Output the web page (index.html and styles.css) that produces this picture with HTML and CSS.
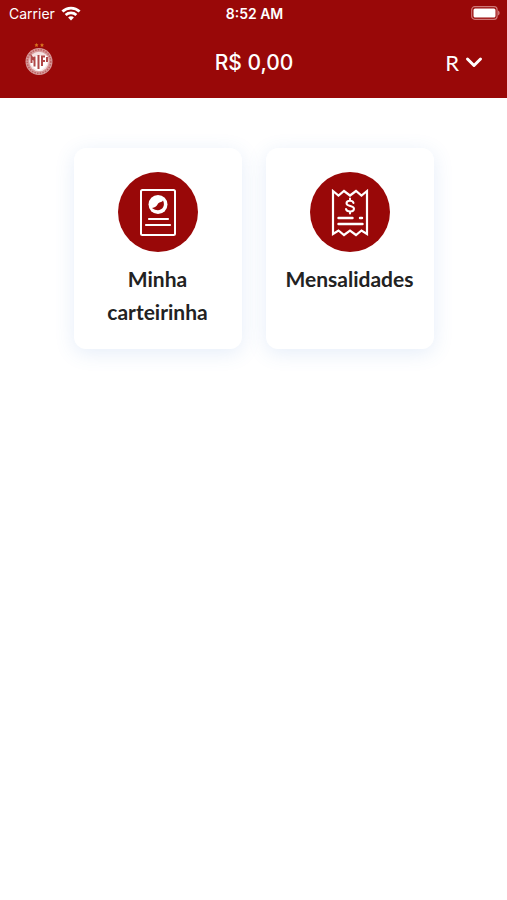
FILE: index.html
```html
<!DOCTYPE html>
<html lang="pt-BR">
<head>
  <meta charset="UTF-8">
  <meta name="viewport" content="width=device-width, initial-scale=1">
  <title>Carteirinha</title>
  <link rel="stylesheet" href="styles.css">
</head>
<body>
  <header class="header">
    <div class="status">
      <div class="carrier">
        <span>Carrier</span>
        <svg width="20" height="15" viewBox="0 0 18 14" fill="none" stroke="#fff" stroke-width="2.6">
          <path d="M1 5.200C5.500 .8 12.500 .8 17 5.200"/>
          <path d="M4 8.400C6.800 5.800 11.200 5.800 14 8.400"/>
          <path d="M6.300 10.800C7.800 9.300 10.200 9.300 11.700 10.800L9 13.600Z" fill="#fff" stroke="none"/>
        </svg>
      </div>
      <time class="clock">8:52 AM</time>
      <svg class="battery" width="29" height="14" viewBox="0 0 29 14">
        <rect x=".7" y=".7" width="25.400" height="12.600" rx="3" fill="none" stroke="#cf7777" stroke-width="1.2"/>
        <rect x="2.500" y="2.500" width="22" height="9" rx="1.500" fill="#fff"/>
        <path d="M27 4.500C29.200 5.500 29.200 8.500 27 9.500Z" fill="#cf7777"/>
      </svg>
    </div>
    <div class="topbar">
      <a class="crest" href="#" aria-label="Início">
        <svg width="28" height="34" viewBox="0 0 28 34">
          <g fill="#d9741f">
            <path d="M11.500 0l.7 1.300 1.300.2-1 1 .3 1.500-1.300-.7-1.300.7.3-1.500-1-1 1.300-.2z"/>
            <path d="M17 0l.7 1.300 1.300.2-1 1 .3 1.500-1.300-.7-1.300.7.3-1.500-1-1 1.300-.2z"/>
          </g>
          <circle cx="14" cy="18.500" r="13.500" fill="#d79a9a"/>
          <circle cx="14" cy="18.500" r="11.800" fill="none" stroke="#bd6262" stroke-width="1.500" stroke-dasharray="1.500 1.200"/>
          <circle cx="14" cy="18.500" r="9.800" fill="#f6e3e3"/>
          <path d="M5.500 13h17v5c0 5-4 8-8.500 10-4.500-2-8.500-5-8.500-10z" fill="#fff"/>
          <g fill="none" stroke="#b04848" stroke-width="2">
            <path d="M6.500 20v-6.500l3 4v-4v10M13.500 12v14M17 23v-9.500h3M17 18h3M22 14v5"/>
          </g>
        </svg>
      </a>
      <strong class="balance">R$ 0,00</strong>
      <button class="account" type="button" aria-label="Conta">
        <span>R</span>
        <svg width="18" height="12" viewBox="0 0 18 12" fill="none" stroke="#fff" stroke-width="3" stroke-linecap="round" stroke-linejoin="round">
          <path d="M2.500 3l6.500 6.500L15.500 3"/>
        </svg>
      </button>
    </div>
  </header>

  <main class="cards">
    <a class="card" href="#">
      <svg class="card-icon" viewBox="0 0 80 80" fill="none" stroke="#fff" stroke-width="2" stroke-linecap="round">
        <circle cx="40" cy="40" r="40" fill="#990808" stroke="none"/>
        <rect x="23" y="18" width="34" height="45" rx="1.500"/>
        <circle cx="40" cy="32.500" r="9.500" fill="#fff" stroke="none"/>
        <path d="M34 36C37 35.500 38.500 34.500 39.500 32.500C41 29.500 43.500 31 45 28.500C48.500 35.500 41.500 41.500 34 36Z" fill="#990808" stroke="none"/>
        <path d="M31 47h19M28 53h24" stroke-width="2.200"/>
      </svg>
      <span class="card-title">Minha carteirinha</span>
    </a>
    <a class="card" href="#">
      <svg class="card-icon" viewBox="0 0 80 80" fill="none" stroke="#fff" stroke-width="2" stroke-linecap="round">
        <circle cx="40" cy="40" r="40" fill="#990808" stroke="none"/>
        <path d="M23 19l5.500 4.500L34 19l6 4.500L46 19l5.500 4.500L57 19v43l-5.500-3.500L46 63l-6-4.500-6 4.500-5.500-4.500L23 62z" stroke-width="2.200"/>
        <path d="M43.500 31c-.6-3-7-3.200-7 .2 0 3.600 7.500 2 7.500 5.600 0 3.500-7.200 3.600-8 .2M40 26.500v1.500M40 40v1.500" stroke-width="2"/>
        <path d="M28.500 46h14M50 46h2M28.500 52h24" stroke-width="2.400"/>
      </svg>
      <span class="card-title">Mensalidades</span>
    </a>
  </main>
</body>
</html>
```
FILE: styles.css
```css
* {
  box-sizing: border-box;
}
body {
  margin: 0;
  background: #fff;
  color: #222;
  font-family: "Liberation Sans", Arial, sans-serif;
}
.header {
  background: #990808;
  color: #fff;
}
.status {
  display: grid;
  grid-template-columns: 1fr auto 1fr;
  align-items: center;
  height: 26px;
  padding: 0 7px 0 9px;
  font-family: Inter, sans-serif;
  font-size: 14px;
}
.carrier {
  display: flex;
  align-items: center;
  gap: 6px;
}
.clock {
  font-weight: 600;
}
.battery {
  justify-self: end;
}
.topbar {
  display: grid;
  grid-template-columns: 1fr auto 1fr;
  align-items: center;
  height: 72px;
  padding: 0 24px 0 25px;
}
.crest {
  justify-self: start;
  height: 38px;
}
.balance {
  font-family: Inter, sans-serif;
  font-size: 21px;
  font-weight: 500;
}
/* account menu */
.account {
  display: flex;
  align-items: center;
  justify-self: end;
  gap: 6px;
  padding: 0;
  border: 0;
  background: none;
  color: #fff;
  font-family: Lato, sans-serif;
  font-size: 22px;
}
.cards {
  display: flex;
  justify-content: center;
  gap: 24px;
  padding: 50px 16px;
}
.card {
  display: flex;
  flex-direction: column;
  align-items: center;
  width: 168px;
  padding: 24px 16px 21px;
  border-radius: 12px;
  background: #fff;
  box-shadow: 0 4px 20px rgba(70, 130, 210, 0.14);
  color: #222;
  text-align: center;
  text-decoration: none;
}
.card-icon {
  width: 80px;
  height: 80px;
}
.card-title {
  margin-top: 10px;
  font-family: Lato, sans-serif;
  font-size: 21px;
  font-weight: 700;
  line-height: 33px;
}
```
